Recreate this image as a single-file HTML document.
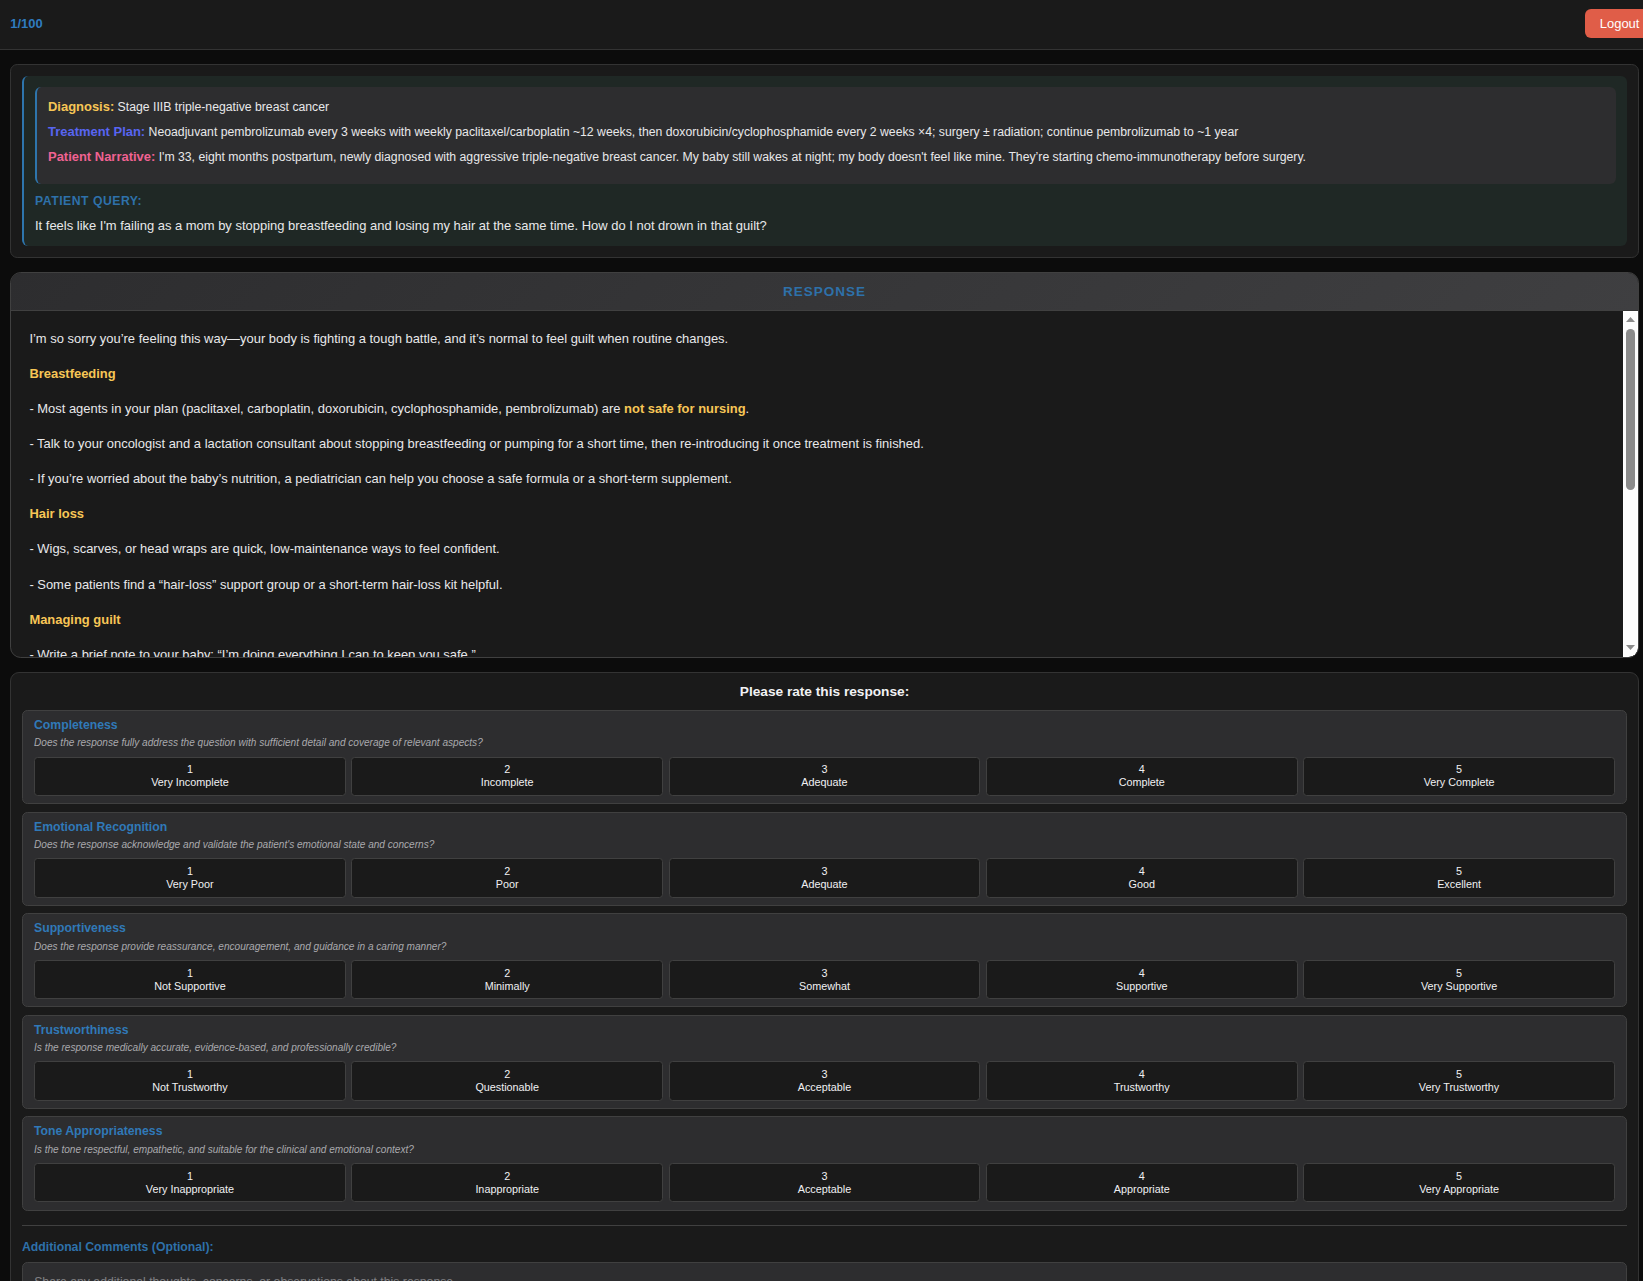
<!DOCTYPE html>
<html lang="en">
<head>
<meta charset="utf-8">
<title>Response Evaluation</title>
<style>
*{box-sizing:border-box;margin:0;padding:0}
html,body{width:1643px;height:1281px;overflow:hidden;background:#0c0c0c}
body{font-family:"Liberation Sans",Arial,sans-serif;color:#e8e8ea;font-size:13px;position:relative}
.hdr{position:absolute;left:0;top:0;width:1643px;height:50px;background:#1a1a1a;border-bottom:1px solid #333}
.cnt{position:absolute;left:10.3px;top:16px;font-weight:bold;font-size:12.96px;color:#2f7cc0;line-height:15px}
.logout{position:absolute;left:1585px;top:9px;width:70px;height:29px;background:#e05d48;border-radius:6px;color:#fff;font-size:12.96px;line-height:29px;padding-left:14.8px}
.card{position:absolute;left:10px;width:1629px;background:#1a1a1a;border:1px solid #333;border-radius:7.2px}
#c1{top:64px;height:194px}
.green{position:absolute;left:11px;top:11px;width:1605px;height:170px;background:#1f2825;border-left:2px solid #2e75ac;border-radius:6px}
.gray{position:absolute;left:11px;top:11px;width:1581px;height:97px;background:#2d2d2f;border-left:2px solid #2e75ac;border-radius:6px}
.ln{position:absolute;left:11px;white-space:nowrap;font-size:12.24px;line-height:15px}
.ln b{font-weight:bold;font-size:12.96px}
.pq{position:absolute;left:11px;top:118px;font-weight:bold;color:#2e71aa;font-size:12.24px;line-height:15px;letter-spacing:.5px}
.q{position:absolute;left:11px;top:142px;font-size:12.96px;line-height:15px;white-space:nowrap}
#c2{top:272px;height:386px;overflow:hidden;border-color:#404040;border-radius:10.8px}
.rh{position:absolute;left:0;top:0;width:100%;height:38px;background:linear-gradient(135deg,#2d2d2f,#3f3f41);border-bottom:1px solid #404040;text-align:center;font-weight:bold;color:#2e71aa;font-size:13.5px;letter-spacing:1px;line-height:37px}
.rb{position:absolute;left:0;top:38px;width:1612px;height:346px;overflow:hidden}
.rb p{position:absolute;left:18.4px;white-space:nowrap;font-size:12.945px;line-height:15px}
.y{color:#f7c656;font-weight:bold}
.sg{position:absolute;left:1612px;top:37px;width:15px;height:1px;background:#353535}
.sb{position:absolute;left:1612px;top:38px;width:15px;height:346px;background:#fcfcfc;box-shadow:inset 0 0 0 1px #fff;border-bottom-right-radius:9.8px}
.sb i{position:absolute;left:3px;top:18px;width:9px;height:161px;border-radius:4.5px;background:#8b8b8b}
.sb:before{content:"";position:absolute;left:3px;top:6px;width:9px;height:5px;background:#8b8b8b;clip-path:polygon(50% 0,100% 100%,0 100%)}
.sb:after{content:"";position:absolute;left:3px;bottom:7px;width:9px;height:5px;background:#8b8b8b;clip-path:polygon(0 0,100% 0,50% 100%)}
#c3{top:672px;height:640px;border-radius:9px;border-bottom-left-radius:0;border-bottom-right-radius:0}
.pl{position:absolute;left:0;top:11px;width:100%;text-align:center;font-weight:bold;font-size:13.68px;line-height:16px;color:#f2f2f4}
.cr{position:absolute;left:11px;width:1605px;height:94.34px;background:#2d2d2f;border:1px solid #404040;border-radius:5.4px}
.cr h4{position:absolute;left:11px;top:6.6px;font-size:12.24px;line-height:15px;color:#3079b8;font-weight:bold;white-space:nowrap}
.cr em{position:absolute;left:11px;top:25.39px;font-size:10.08px;line-height:13px;color:#a9a9ad;font-style:italic;white-space:nowrap}
.bt{position:absolute;top:45.8px;width:311.88px;height:39px;background:#1a1a1a;border:1px solid #404040;border-radius:3.6px;text-align:center;font-size:10.8px;line-height:12.96px;padding-top:5.1px;color:#f0f0f2}
.bt i{display:block;font-style:normal;height:12.96px}
.r2 .bt,.r4 .bt{height:40px}
.r2 .bt i{height:13.96px}
.r2 h4,.r4 h4{top:7.6px}
.r3 .bt,.r5 .bt{padding-top:6.1px}
.hr{position:absolute;left:11px;top:552px;width:1605px;height:1px;background:#404040}
.ac{position:absolute;left:11px;top:567px;font-weight:bold;color:#2e71aa;font-size:12.24px;line-height:15px}
.ta{position:absolute;left:11px;top:589px;width:1605px;height:80px;background:#2d2d2f;border:1px solid #404040;border-radius:5.4px;color:#808084;font-size:12.24px;line-height:15px;padding:12px 11.2px}
</style>
</head>
<body>
<div class="hdr"><div class="cnt">1/100</div><div class="logout">Logout</div></div>

<div class="card" id="c1">
 <div class="green">
  <div class="gray">
   <div class="ln" style="top:12px"><b style="color:#f7c656">Diagnosis:</b> Stage IIIB triple-negative breast cancer</div>
   <div class="ln" style="top:37px"><b style="color:#5865f2">Treatment Plan:</b> Neoadjuvant pembrolizumab every 3 weeks with weekly paclitaxel/carboplatin ~12 weeks, then doxorubicin/cyclophosphamide every 2 weeks ×4; surgery ± radiation; continue pembrolizumab to ~1 year</div>
   <div class="ln" style="top:62px"><b style="color:#f06292">Patient Narrative:</b> I'm 33, eight months postpartum, newly diagnosed with aggressive triple-negative breast cancer. My baby still wakes at night; my body doesn't feel like mine. They’re starting chemo-immunotherapy before surgery.</div>
  </div>
  <div class="pq">PATIENT QUERY:</div>
  <div class="q">It feels like I'm failing as a mom by stopping breastfeeding and losing my hair at the same time. How do I not drown in that guilt?</div>
 </div>
</div>

<div class="card" id="c2">
 <div class="rh">RESPONSE</div>
 <div class="rb">
  <p style="top:20px">I’m so sorry you’re feeling this way—your body is fighting a tough battle, and it’s normal to feel guilt when routine changes.</p>
  <p style="top:55px" class="y">Breastfeeding</p>
  <p style="top:90px">- Most agents in your plan (paclitaxel, carboplatin, doxorubicin, cyclophosphamide, pembrolizumab) are <span class="y">not safe for nursing</span>.</p>
  <p style="top:125px">- Talk to your oncologist and a lactation consultant about stopping breastfeeding or pumping for a short time, then re-introducing it once treatment is finished.</p>
  <p style="top:160px">- If you’re worried about the baby’s nutrition, a pediatrician can help you choose a safe formula or a short-term supplement.</p>
  <p style="top:195px" class="y">Hair loss</p>
  <p style="top:230px">- Wigs, scarves, or head wraps are quick, low-maintenance ways to feel confident.</p>
  <p style="top:266px">- Some patients find a “hair-loss” support group or a short-term hair-loss kit helpful.</p>
  <p style="top:301px" class="y">Managing guilt</p>
  <p style="top:336px">- Write a brief note to your baby: “I’m doing everything I can to keep you safe.”</p>
 </div>
 <div class="sg"></div><div class="sb"><i></i></div>
</div>

<div class="card" id="c3">
 <div class="pl">Please rate this response:</div>

 <div class="cr r1" style="top:37.10px"><h4>Completeness</h4><em>Does the response fully address the question with sufficient detail and coverage of relevant aspects?</em>
  <div class="bt" style="left:11.00px"><i>1</i>Very Incomplete</div><div class="bt" style="left:328.28px"><i>2</i>Incomplete</div><div class="bt" style="left:645.56px"><i>3</i>Adequate</div><div class="bt" style="left:962.84px"><i>4</i>Complete</div><div class="bt" style="left:1280.12px"><i>5</i>Very Complete</div></div>

 <div class="cr r2" style="top:138.62px"><h4>Emotional Recognition</h4><em>Does the response acknowledge and validate the patient's emotional state and concerns?</em>
  <div class="bt" style="left:11.00px"><i>1</i>Very Poor</div><div class="bt" style="left:328.28px"><i>2</i>Poor</div><div class="bt" style="left:645.56px"><i>3</i>Adequate</div><div class="bt" style="left:962.84px"><i>4</i>Good</div><div class="bt" style="left:1280.12px"><i>5</i>Excellent</div></div>

 <div class="cr r3" style="top:240.14px"><h4>Supportiveness</h4><em>Does the response provide reassurance, encouragement, and guidance in a caring manner?</em>
  <div class="bt" style="left:11.00px"><i>1</i>Not Supportive</div><div class="bt" style="left:328.28px"><i>2</i>Minimally</div><div class="bt" style="left:645.56px"><i>3</i>Somewhat</div><div class="bt" style="left:962.84px"><i>4</i>Supportive</div><div class="bt" style="left:1280.12px"><i>5</i>Very Supportive</div></div>

 <div class="cr r4" style="top:341.66px"><h4>Trustworthiness</h4><em>Is the response medically accurate, evidence-based, and professionally credible?</em>
  <div class="bt" style="left:11.00px"><i>1</i>Not Trustworthy</div><div class="bt" style="left:328.28px"><i>2</i>Questionable</div><div class="bt" style="left:645.56px"><i>3</i>Acceptable</div><div class="bt" style="left:962.84px"><i>4</i>Trustworthy</div><div class="bt" style="left:1280.12px"><i>5</i>Very Trustworthy</div></div>

 <div class="cr r5" style="top:443.18px"><h4>Tone Appropriateness</h4><em>Is the tone respectful, empathetic, and suitable for the clinical and emotional context?</em>
  <div class="bt" style="left:11.00px"><i>1</i>Very Inappropriate</div><div class="bt" style="left:328.28px"><i>2</i>Inappropriate</div><div class="bt" style="left:645.56px"><i>3</i>Acceptable</div><div class="bt" style="left:962.84px"><i>4</i>Appropriate</div><div class="bt" style="left:1280.12px"><i>5</i>Very Appropriate</div></div>

 <div class="hr"></div>
 <div class="ac">Additional Comments (Optional):</div>
 <div class="ta">Share any additional thoughts, concerns, or observations about this response...</div>
</div>
</body>
</html>
